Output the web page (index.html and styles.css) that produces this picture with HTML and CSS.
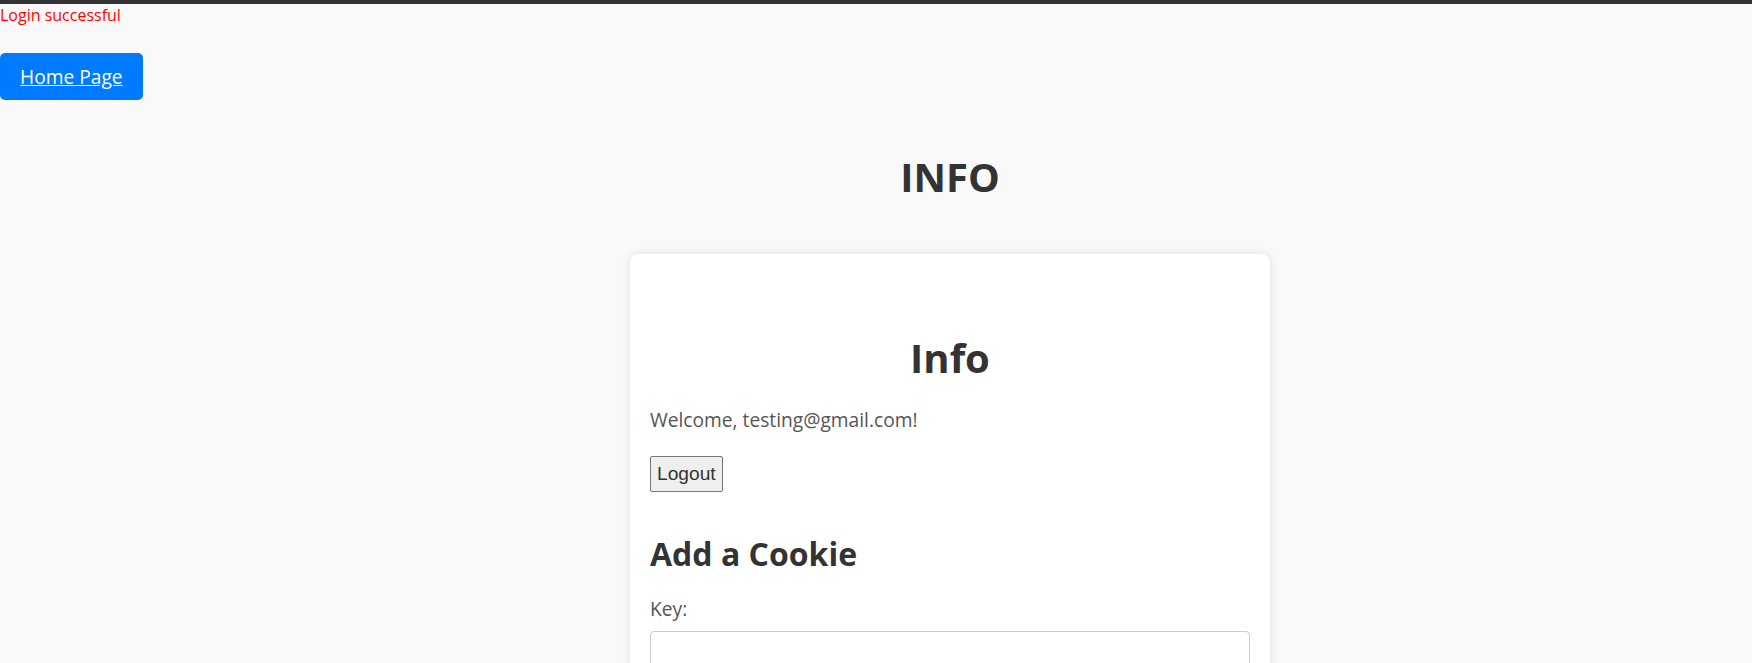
FILE: index.html
```html
<!DOCTYPE html>
<html lang="en">
<head>
<meta charset="utf-8">
<title>Info</title>
<link rel="stylesheet" href="styles.css">
</head>
<body>
<div class="topbar"></div>
<div class="layout">
  <aside class="side">
    <div class="flash">Login successful</div>
    <a class="home-btn" href="#">Home Page</a>
  </aside>
  <main class="main">
    <h1 class="page-title">INFO</h1>
    <section class="card">
      <h2 class="card-title">Info</h2>
      <p class="welcome">Welcome, testing@gmail.com!</p>
      <button class="logout" type="button">Logout</button>
      <h3 class="section-title">Add a Cookie</h3>
      <form class="cookie-form">
        <label class="field-label" for="key">Key:</label>
        <input class="field-input" id="key" type="text">
        <label class="field-label" for="value">Value:</label>
        <input class="field-input" id="value" type="text">
        <button class="submit-btn" type="button">Add Cookie</button>
      </form>
    </section>
  </main>
</div>
</body>
</html>
```

FILE: styles.css
```css
html, body {
  margin: 0;
  padding: 0;
}

body {
  background: #f9f9f9;
  font-family: "Open Sans", "Liberation Sans", sans-serif;
  color: #333;
}

.topbar {
  height: 4px;
  background: #333;
}

.layout {
  display: flex;
  align-items: flex-start;
}

.side {
  width: 148px;
  flex: none;
  display: flex;
  flex-direction: column;
  align-items: flex-start;
}

.flash {
  color: #ff0000;
  font-size: 16px;
  line-height: 22px;
}

.home-btn {
  margin-top: 27px;
  display: inline-block;
  background: #007bff;
  color: #fff;
  font-size: 19.2px;
  line-height: 27px;
  padding: 10px 20px;
  border-radius: 5px;
  text-decoration: underline;
}

.main {
  flex: 1;
  display: flex;
  flex-direction: column;
  align-items: center;
}

.page-title {
  margin: 146px 0 0;
  font-size: 40px;
  line-height: 54px;
  font-weight: 700;
  color: #333;
  text-align: center;
}

.card {
  margin-top: 50px;
  width: 600px;
  padding: 20px;
  background: #fff;
  border-radius: 8px;
  box-shadow: 0 0 10px rgba(0, 0, 0, 0.1);
}

.card-title {
  margin: 57px 0 0;
  font-size: 40px;
  line-height: 54px;
  font-weight: 700;
  text-align: center;
  color: #333;
}

.welcome {
  margin: 22px 0 0;
  font-size: 19.2px;
  line-height: 26px;
  color: #555;
}

.logout {
  margin-top: 23px;
  display: block;
  font-family: "Liberation Sans", Arial, sans-serif;
  font-size: 19.2px;
  line-height: 22px;
  padding: 6px 6px;
  color: #333;
  background: #efefef;
  border: 1px solid #767676;
  border-radius: 2px;
}

.section-title {
  margin: 40px 0 0;
  font-size: 32px;
  line-height: 44px;
  font-weight: 700;
  color: #333;
}

.cookie-form {
  display: flex;
  flex-direction: column;
  margin-top: 20px;
}

.field-label {
  font-size: 19.2px;
  line-height: 26px;
  color: #555;
}

.field-input {
  margin-top: 9px;
  margin-bottom: 20px;
  box-sizing: border-box;
  width: 100%;
  height: 44px;
  padding: 10px;
  border: 1px solid #ccc;
  border-radius: 4px;
  background: #fff;
  font-size: 16px;
}

.submit-btn {
  align-self: flex-start;
  padding: 10px 20px;
  font-size: 16px;
  background: #007bff;
  color: #fff;
  border: none;
  border-radius: 5px;
}
```
